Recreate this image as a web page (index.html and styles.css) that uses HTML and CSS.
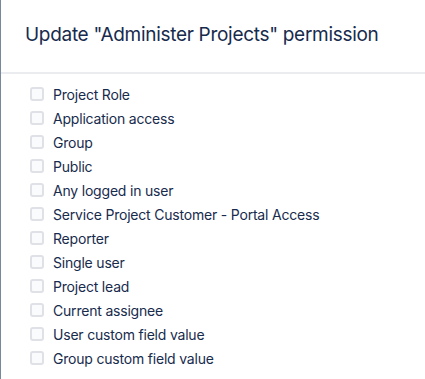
FILE: index.html
```html
<!DOCTYPE html>
<html lang="en">
<head>
    <meta charset="UTF-8">
    <meta name="viewport" content="width=device-width, initial-scale=1.0">
    <title>Update permission</title>
    <link rel="stylesheet" href="styles.css">
</head>
<body>
    <div class="backdrop">
        <section class="modal">
            <header class="modal-header">
                <h1>Update "Administer Projects" permission</h1>
            </header>
            <ul class="options">
                <li><label><input type="checkbox"><span class="box"></span>Project Role</label></li>
                <li><label><input type="checkbox"><span class="box"></span>Application access</label></li>
                <li><label><input type="checkbox"><span class="box"></span>Group</label></li>
                <li><label><input type="checkbox"><span class="box"></span>Public</label></li>
                <li><label><input type="checkbox"><span class="box"></span>Any logged in user</label></li>
                <li><label><input type="checkbox"><span class="box"></span>Service Project Customer - Portal Access</label></li>
                <li><label><input type="checkbox"><span class="box"></span>Reporter</label></li>
                <li><label><input type="checkbox"><span class="box"></span>Single user</label></li>
                <li><label><input type="checkbox"><span class="box"></span>Project lead</label></li>
                <li><label><input type="checkbox"><span class="box"></span>Current assignee</label></li>
                <li><label><input type="checkbox"><span class="box"></span>User custom field value</label></li>
                <li><label><input type="checkbox"><span class="box"></span>Group custom field value</label></li>
            </ul>
        </section>
    </div>
</body>
</html>
```

FILE: styles.css
```css
body {
    margin: 0;
    padding: 0;
    font-family: Inter, "Liberation Sans", Arial, sans-serif;
    color: #172b4d;
    background-color: #7a869a;
}

.backdrop {
    padding-left: 1px;
    height: 379px;
    overflow: hidden;
}

.modal {
    background: white;
    height: 100%;
}

.modal-header {
    padding: 23px 24px 0 24px;
    height: 49px;
    border-bottom: 2px solid #ebecf0;
}

.modal-header h1 {
    margin: 0;
    font-size: 19px;
    font-weight: 400;
    line-height: 24px;
    letter-spacing: -0.3px;
    white-space: nowrap;
}

.options {
    list-style: none;
    margin: 0;
    padding: 8px 0 0 29px;
}

.options li {
    height: 24px;
}

.options label {
    display: flex;
    align-items: center;
    height: 24px;
    font-size: 14px;
    letter-spacing: -0.2px;
    cursor: pointer;
}

.options input {
    display: none;
}

.box {
    box-sizing: border-box;
    width: 14px;
    height: 14px;
    margin-right: 9px;
    border: 2px solid #dfe1e6;
    border-radius: 3px;
    background: #fafbfc;
}
```
